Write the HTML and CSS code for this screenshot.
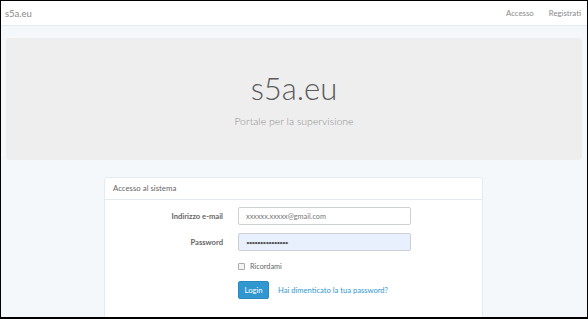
FILE: index.html
```html
<!DOCTYPE html>
<html lang="it">
<head>
  <meta charset="UTF-8" />
  <meta name="viewport" content="width=device-width, initial-scale=1.0"/>
  <title>s5a.eu | Accesso</title>
  <link rel="stylesheet" href="styles.css">
</head>
<body>
  <div class="frame">

    <nav class="navbar">
      <a href="#" class="brand">s5a.eu</a>
      <div class="nav-right">
        <a href="#" class="nav-link">Accesso</a>
        <a href="#" class="nav-link">Registrati</a>
      </div>
    </nav>

    <div class="content">
      <div class="jumbotron">
        <h1>s5a.eu</h1>
        <p>Portale per la supervisione</p>
      </div>

      <div class="panel">
        <div class="panel-heading">Accesso al sistema</div>
        <div class="panel-body">
          <form class="login-form">
            <div class="form-row">
              <label for="email">Indirizzo e-mail</label>
              <input type="text" id="email" class="form-input" value="xxxxxx.xxxxx@gmail.com">
            </div>
            <div class="form-row">
              <label for="password">Password</label>
              <input type="text" id="password" class="form-input autofill" value="•••••••••••••••">
            </div>
            <div class="form-row">
              <span></span>
              <label class="check"><span class="box"></span>Ricordami</label>
            </div>
            <div class="form-row">
              <span></span>
              <div class="actions">
                <button type="button" class="btn">Login</button>
                <a href="#" class="forgot">Hai dimenticato la tua password?</a>
              </div>
            </div>
          </form>
        </div>
      </div>
    </div>

  </div>
</body>
</html>
```

FILE: styles.css
```css
* {
  box-sizing: border-box;
}

body {
  margin: 0;
  font-family: Lato, "Open Sans", sans-serif;
  color: #636b6f;
}

.frame {
  width: 588px;
  height: 319px;
  border: 1px solid #000;
  border-bottom-width: 2px;
  background-color: #f5f8fa;
  overflow: hidden;
}

/* Top bar */
.navbar {
  height: 25px;
  background-color: #fff;
  border-bottom: 1px solid #e4ebf0;
  display: flex;
  align-items: center;
  justify-content: space-between;
  padding: 0 6px 0 4px;
}

.brand {
  font-size: 9.5px;
  color: #888;
  text-decoration: none;
}

.nav-right {
  display: flex;
  gap: 15px;
}

.nav-link {
  font-size: 7.8px;
  color: #8a8a8a;
  text-decoration: none;
}

.content {
  padding: 12px 5px 0;
}

.jumbotron {
  height: 122px;
  background-color: #eee;
  border-radius: 3px;
  text-align: center;
  padding-top: 32px;
}

.jumbotron h1 {
  margin: 0;
  font-size: 31px;
  font-weight: 300;
  color: #5a5a5a;
  line-height: 36px;
}

.jumbotron p {
  margin: 9px 0 0;
  font-size: 10.5px;
  font-weight: 300;
  color: #8f8f8f;
}

/* Login panel */
.panel {
  width: 379px;
  margin: 17px 0 0 98px;
  background-color: #fff;
  border: 1px solid #e4ebf0;
  border-radius: 3px;
}

.panel-heading {
  height: 22px;
  padding: 0 8px;
  font-size: 7.8px;
  line-height: 21px;
  color: #666;
  border-bottom: 1px solid #e4ebf0;
}

.panel-body {
  padding: 7px 0 20px;
}

.form-row {
  display: grid;
  grid-template-columns: 118px 173px;
  column-gap: 15px;
  align-items: center;
  margin-bottom: 8px;
}

.form-row label {
  text-align: right;
  font-size: 7.6px;
  font-weight: 700;
  color: #666;
}

.form-input {
  height: 18px;
  border: 1px solid #ccd0d2;
  border-radius: 2px;
  padding: 0 7px;
  font-family: Lato, sans-serif;
  font-size: 7.3px;
  color: #777;
  background-color: #fff;
}

.form-input.autofill {
  background-color: #e8f0fe;
  letter-spacing: -1px;
  font-size: 6.5px;
  color: #555;
}

.form-row .check {
  text-align: left;
  font-weight: 400;
  font-size: 7.3px;
  display: flex;
  align-items: center;
  gap: 5px;
  height: 14px;
}

.box {
  width: 7px;
  height: 7px;
  border: 1px solid #aaa;
  border-radius: 1px;
  background-color: #f4f4f4;
}

.actions {
  display: flex;
  align-items: center;
  gap: 9px;
}

.btn {
  height: 18px;
  width: 31px;
  padding: 0;
  border: 1px solid #2a88bd;
  border-radius: 2px;
  background-color: #3097d1;
  color: #fff;
  font-family: Lato, sans-serif;
  font-size: 7.6px;
}

.forgot {
  font-size: 7.6px;
  color: #3097d1;
  text-decoration: none;
}
```
